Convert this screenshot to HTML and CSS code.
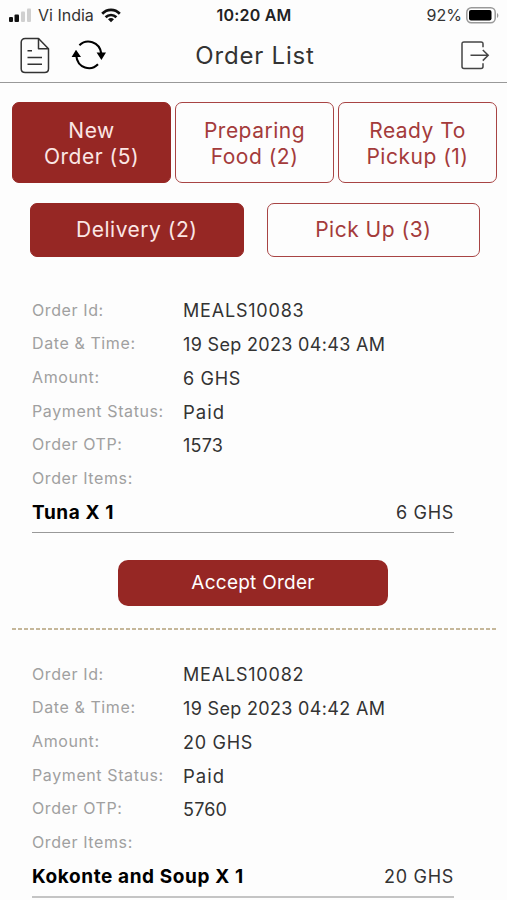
FILE: index.html
```html
<!DOCTYPE html>
<html lang="en">
<head>
    <meta charset="UTF-8">
    <meta name="viewport" content="width=device-width, initial-scale=1.0">
    <title>Order List</title>
    <link rel="stylesheet" href="styles.css">
</head>
<body>

<div class="status-bar">
    <div class="carrier">
        <svg width="23" height="15" viewBox="0 0 23 15">
            <rect x="0" y="9" width="4" height="5" rx="1" fill="#111"/>
            <rect x="5.5" y="6.5" width="4.5" height="7.5" rx="1" fill="#111"/>
            <rect x="12" y="3.5" width="4" height="10.5" rx="1" fill="#d0d0d0"/>
            <rect x="18" y="0.5" width="4" height="13.5" rx="1" fill="#d0d0d0"/>
        </svg>
        <span class="carrier-name">Vi India</span>
        <svg width="20" height="15" viewBox="0 0 20 15" fill="none" stroke="#111" stroke-width="2.7">
            <path d="M1.2 5.8C6.2 0.6 13.8 0.6 18.8 5.8"/>
            <path d="M4.6 9.3C7.7 6.2 12.3 6.2 15.4 9.3"/>
            <path d="M10 14.2L7 11.2C8.8 9.7 11.2 9.7 13 11.2Z" fill="#111" stroke="none"/>
        </svg>
    </div>
    <div class="clock">10:20 AM</div>
    <div class="battery">
        <span class="battery-level">92%</span>
        <svg width="33" height="17" viewBox="0 0 33 17">
            <rect x="0.8" y="0.8" width="28.4" height="15" rx="4.5" fill="#fff" stroke="#999" stroke-width="1.5"/>
            <rect x="3" y="3" width="22.5" height="10.6" rx="2" fill="#000"/>
            <path d="M31 6v5c1.8-.8 1.8-4.2 0-5z" fill="#999"/>
        </svg>
    </div>
</div>

<div class="header">
    <div class="header-icons">
        <svg width="30" height="37" viewBox="0 0 30 37" fill="none" stroke="#333" stroke-width="1.5" stroke-linejoin="round">
            <path d="M18.5 1.5H5.2C2.8 1.5 1.2 3 1.2 5.3V31.7C1.2 34 2.8 35.5 5.2 35.5H24.6C27 35.5 28.5 34 28.5 31.7V11.7Z"/>
            <path d="M18.5 1.5V11.7H28.5"/>
            <path d="M7.5 13.8H12M7.5 20.5H22M7.5 27.2H22"/>
        </svg>
        <svg width="36" height="30" viewBox="0 0 36 30" fill="none" stroke="#000" stroke-width="2.1">
            <path d="M8.4 5.2C15.5-1.6 28.5 1.2 30.3 13.5"/>
            <path d="M27 24.3C20 31.5 6.5 28.5 5.2 15.5"/>
            <path d="M25.6 12.6H35L30.4 20Z M0.6 17H10L5 9.7Z" fill="#000" stroke="none"/>
        </svg>
    </div>
    <div class="title">Order List</div>
    <svg class="logout" width="29" height="29" viewBox="0 0 29 29" fill="none" stroke="#444" stroke-width="1.5">
        <path d="M22 6.2V3C22 1.6 21.4 1.1 20 1.1H3C1.6 1.1 1 1.6 1 3V25.5C1 26.9 1.6 27.5 3 27.5H20C21.4 27.5 22 26.9 22 25.5V22.3"/>
        <path d="M9.5 14.3H27M21.8 9L27.2 14.3L21.8 19.6"/>
    </svg>
</div>

<div class="tabs">
    <div class="tab active">New<br>Order (5)</div>
    <div class="tab">Preparing<br>Food (2)</div>
    <div class="tab">Ready To<br>Pickup (1)</div>
</div>
<div class="sub-tabs">
    <div class="tab active">Delivery (2)</div>
    <div class="tab">Pick Up (3)</div>
</div>

<div class="order">
    <div class="order-details">
        <div class="row"><span class="label">Order Id:</span><span class="value code">MEALS10083</span></div>
        <div class="row"><span class="label">Date &amp; Time:</span><span class="value">19 Sep 2023 04:43 AM</span></div>
        <div class="row"><span class="label">Amount:</span><span class="value amount">6 GHS</span></div>
        <div class="row"><span class="label">Payment Status:</span><span class="value status">Paid</span></div>
        <div class="row"><span class="label">Order OTP:</span><span class="value otp">1573</span></div>
        <div class="row"><span class="label">Order Items:</span></div>
        <div class="item"><span class="item-name">Tuna X 1</span><span class="value amount">6 GHS</span></div>
    </div>
    <button class="accept">Accept Order</button>
    <svg class="divider" width="484" height="2" viewBox="0 0 484 2">
        <path d="M0 1H484" stroke="#b3a079" stroke-width="1.3" stroke-dasharray="4 2"/>
    </svg>
</div>

<div class="order">
    <div class="order-details last">
        <div class="row"><span class="label">Order Id:</span><span class="value code">MEALS10082</span></div>
        <div class="row"><span class="label">Date &amp; Time:</span><span class="value">19 Sep 2023 04:42 AM</span></div>
        <div class="row"><span class="label">Amount:</span><span class="value amount">20 GHS</span></div>
        <div class="row"><span class="label">Payment Status:</span><span class="value status">Paid</span></div>
        <div class="row"><span class="label">Order OTP:</span><span class="value otp">5760</span></div>
        <div class="row"><span class="label">Order Items:</span></div>
        <div class="item"><span class="item-name">Kokonte and Soup X 1</span><span class="value amount">20 GHS</span></div>
    </div>
</div>

</body>
</html>
```
FILE: styles.css
```css
* {
    box-sizing: border-box;
}
body {
    font-family: Inter, "Liberation Sans", sans-serif;
    background: #fdfdfd;
    margin: 0;
    color: #333;
}
.status-bar {
    display: grid;
    grid-template-columns: 1fr auto 1fr;
    align-items: center;
    height: 30px;
    padding: 0 8px 0 9px;
}
.carrier, .battery {
    display: flex;
    align-items: center;
}
.carrier-name {
    font-size: 16px;
    margin: 0 7px 0 6px;
}
.clock {
    font-size: 16px;
    font-weight: 600;
    letter-spacing: 0.2px;
    color: #222;
}
.battery {
    justify-content: flex-end;
    gap: 4px;
    font-size: 16px;
}
.header {
    display: grid;
    grid-template-columns: 1fr auto 1fr;
    align-items: center;
    height: 53px;
    padding: 0 17px 2px 20px;
    border-bottom: 1px solid #999;
}
.header-icons {
    display: flex;
    align-items: center;
    gap: 21px;
}
.header svg, .status-bar svg {
    display: block;
}
.title {
    font-size: 24px;
    letter-spacing: 0.8px;
}
.logout {
    justify-self: end;
}
.tabs {
    display: grid;
    grid-template-columns: repeat(3, 1fr);
    gap: 4px;
    height: 81px;
    margin: 19px 10px 0 12px;
}
.sub-tabs {
    display: grid;
    grid-template-columns: repeat(2, 1fr);
    gap: 23px;
    height: 54px;
    margin: 20px 27px 0 30px;
}
.tab {
    display: flex;
    align-items: center;
    justify-content: center;
    border: 1.5px solid #a84444;
    border-radius: 7px;
    color: #a43b3b;
    font-size: 21px;
    line-height: 26px;
    letter-spacing: 0.5px;
    text-align: center;
}
.tabs .tab {
    padding-top: 2px;
}
.tab.active {
    background: #962724;
    border-color: #962724;
    color: #fbe6e4;
}
.order {
    padding-top: 28px;
    margin: 0 11px 0 12px;
}
.sub-tabs + .order {
    height: 364px;
    margin-top: 9px;
}
.order-details {
    margin: 0 42px 0 20px;
    border-bottom: 1px solid #999;
}
.order-details.last {
    border-bottom: 2px solid #c4c4c4;
}
.row, .item {
    display: flex;
    align-items: center;
    height: 33.65px;
}
.label {
    width: 151px;
    padding-bottom: 2px;
    color: #a0a0a0;
    font-size: 16px;
    letter-spacing: 0.6px;
    white-space: nowrap;
}
.value {
    font-size: 18px;
    letter-spacing: 0.33px;
}
.value.code {
    letter-spacing: 0.8px;
}
.value.amount {
    letter-spacing: 0.7px;
}
.value.status {
    font-size: 18.5px;
    letter-spacing: 1px;
}
.value.otp {
    letter-spacing: 0.2px;
}
.item {
    justify-content: space-between;
    height: 36px;
    padding-bottom: 3px;
}
.item-name {
    font-size: 19px;
    font-weight: 700;
    letter-spacing: 0.6px;
    color: #000;
}
.accept {
    display: block;
    width: 270px;
    height: 46px;
    margin: 27px auto 0 106px;
    border: none;
    border-radius: 10px;
    background: #962724;
    color: #fff;
    font-family: inherit;
    font-size: 19px;
    letter-spacing: 0.25px;
}
.divider {
    display: block;
    margin-top: 22px;
}
```
